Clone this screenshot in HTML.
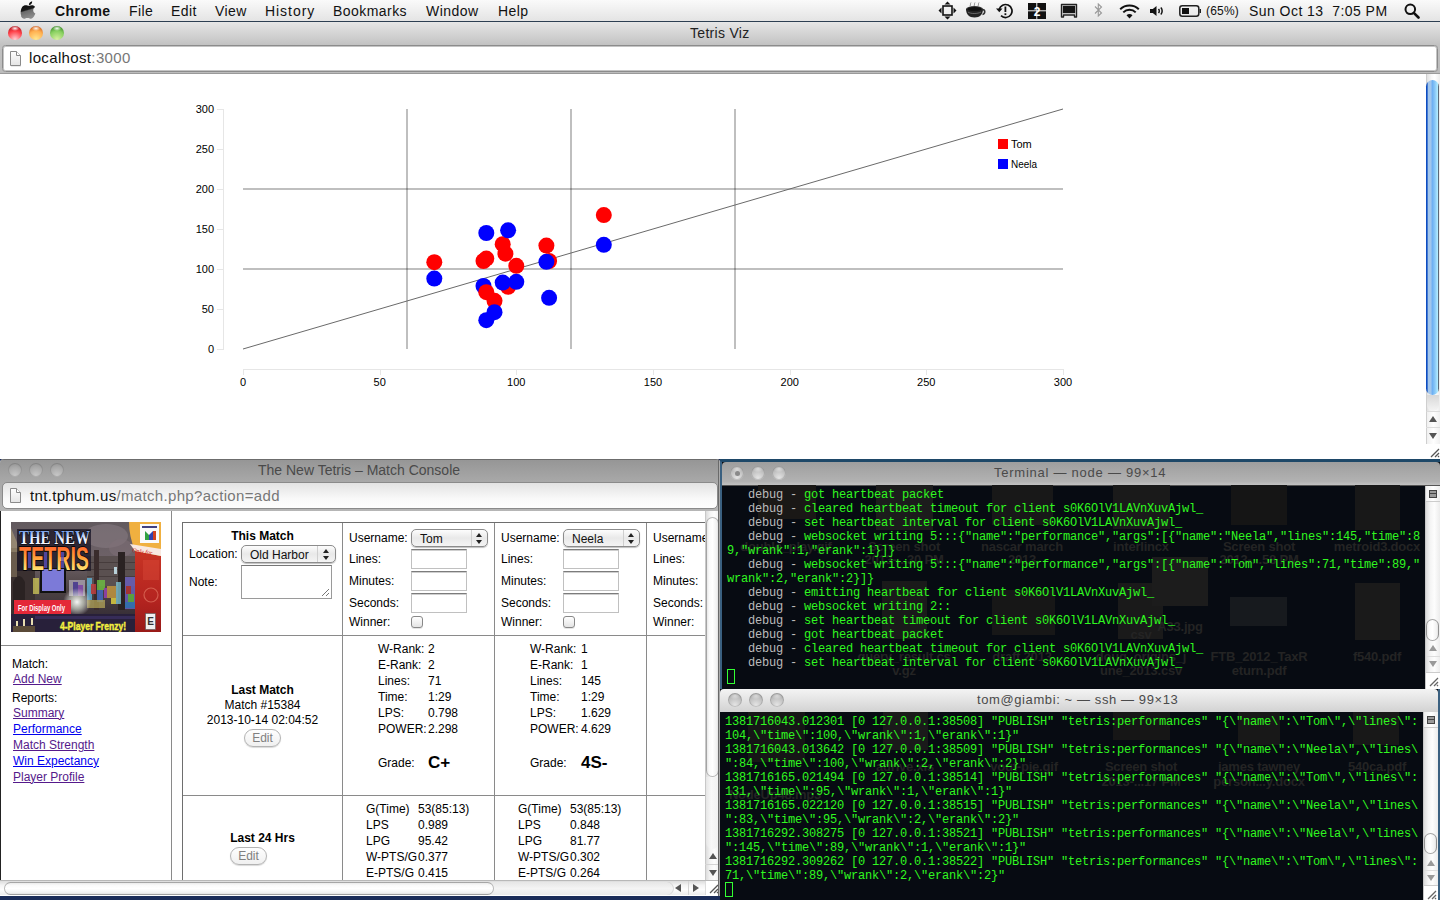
<!DOCTYPE html>
<html><head><meta charset="utf-8">
<style>
*{margin:0;padding:0;box-sizing:border-box}
html,body{width:1440px;height:900px;overflow:hidden;background:#1a2c58;font-family:"Liberation Sans",sans-serif;position:relative}
.abs{position:absolute}
#menubar{left:0;top:0;width:1440px;height:22px;background:linear-gradient(#fafafa,#e4e4e4);border-bottom:1px solid #2d3f52;font-size:14px;color:#111}
#menubar span{position:absolute;top:3px;white-space:nowrap;letter-spacing:0.45px}
.tl{position:absolute;border-radius:50%}
.tb{position:absolute;white-space:nowrap}
#w1{left:0;top:22px;width:1440px;height:437px;background:#fff;overflow:hidden}
#w1 .title{left:0;top:0;width:1440px;height:23px;background:linear-gradient(#e6e6e6,#c2c2c2)}
#w1 .toolbar{left:0;top:23px;width:1440px;height:29px;background:linear-gradient(#c2c2c2,#bcbcbc);border-bottom:1px solid #9a9a9a}
.url{position:absolute;background:#fff;border:1px solid #9b9b9b;border-radius:4px;font-size:15px;color:#111;white-space:nowrap}
.url .g{color:#777}
.term{background:#070b12;font-family:"Liberation Mono",monospace;font-size:12px;letter-spacing:-0.2px;line-height:14px;color:#30f820}
.term pre{position:absolute;font-family:inherit;font-size:inherit;line-height:inherit;white-space:pre}
.dbg{color:#bbb}
.tlg2{width:14px;height:14px;background:radial-gradient(circle at 50% 90%,#c8c8c8 0%,#a8a8a8 60%,#8a8a8a 100%);box-shadow:inset 0 0 0 1px rgba(0,0,0,0.12)}
.t{position:absolute;white-space:nowrap;line-height:14px;font-size:12px}
.sel{position:absolute;border:1px solid #8c8c8c;border-radius:5px;background:linear-gradient(#fdfdfd,#e9e9e9 50%,#f4f4f4);box-shadow:0 1px 1px rgba(0,0,0,0.25)}
.sel span{position:absolute;top:2px;font-size:12px;line-height:14px;color:#111;white-space:nowrap}
.sel i{position:absolute;top:0;width:1px;height:100%;background:#cfcfcf}
.sel b{position:absolute;top:2.5px;width:0;height:0;border-left:3px solid transparent;border-right:3px solid transparent;border-bottom:4px solid #222}
.sel b::after{content:"";position:absolute;left:-3px;top:7px;border-left:3px solid transparent;border-right:3px solid transparent;border-top:4px solid #222}
.ta{position:absolute;border:1px solid #9a9a9a;border-top-color:#777;background:#fff}
.inp{position:absolute;border:1px solid #c0c0c0;border-top:1px solid #7c7c7c;box-shadow:inset 0 1px 0 #cfcfcf;background:#fff}
.chk{position:absolute;width:12px;height:12px;border:1px solid #888;border-radius:3px;background:linear-gradient(#fff,#e4e4e4);box-shadow:0 1px 0 rgba(0,0,0,0.1)}
.btn{position:absolute;border:1px solid #b4b4b4;border-radius:9px;background:linear-gradient(#fefefe,#f0f0f0);font-size:12px;line-height:16px;text-align:center;color:#808080;box-shadow:0 1px 1px rgba(0,0,0,0.15)}
.tlg{width:14px;height:14px;background:radial-gradient(ellipse 40% 25% at 50% 20%,rgba(255,255,255,0.5),rgba(255,255,255,0)),radial-gradient(circle at 50% 85%,#e4e4e4 0%,#c0c0c0 55%,#8e8e8e 100%);box-shadow:inset 0 0 0 1px rgba(0,0,0,0.12)}
.cursor{width:8px;height:15px;border:1.5px solid #33ff33}
</style></head><body>
<!-- menu bar -->
<div id="menubar" class="abs">
  <!--MB--><svg class="abs" style="left:19.5px;top:1px" width="17" height="19" viewBox="0 0 17 19"><defs><linearGradient id="apg" x1="0" y1="0" x2="0.25" y2="1"><stop offset="0" stop-color="#000"/><stop offset="0.55" stop-color="#1a1a1a"/><stop offset="0.62" stop-color="#6a6a6a"/><stop offset="1" stop-color="#8a8a8a"/></linearGradient></defs><path d="M11.6,0.3c0.1,1.1-0.3,2.1-0.9,2.9c-0.7,0.8-1.6,1.3-2.6,1.2C8,3.4,8.5,2.3,9.1,1.7C9.8,0.9,10.8,0.4,11.6,0.3z M14.8,13.9c-0.5,1.1-0.7,1.6-1.3,2.5c-0.9,1.3-2.1,2.9-3.6,2.9c-1.3,0-1.7-0.8-3.5-0.8c-1.8,0-2.2,0.9-3.5,0.8C1.4,19.3,0.3,17.8-0.6,16.5 M8.3,5.2c1,0,2-0.6,3.1-0.6c0.5,0,2.3,0.1,3.4,1.8c-3,1.6-2.5,5.9,0.3,7.3c-0.5,1.1-0.7,1.6-1.3,2.5c-0.9,1.3-2.1,2.9-3.6,2.9c-1.3,0-1.7-0.8-3.5-0.8c-1.8,0-2.2,0.9-3.5,0.8c-1.5,0-2.6-1.4-3.5-2.7C-1.4,13.2-1,8.6,0.7,6.4c1-1.3,2.5-1.9,3.8-1.9C5.9,4.5,7,5.2,8.3,5.2z" fill="url(#apg)" transform="translate(1.5,0) scale(0.92)"/></svg>
<!-- move icon -->
<svg class="abs" style="left:938px;top:1px" width="19" height="19" viewBox="0 0 19 19" fill="#111"><rect x="5" y="5" width="9" height="9" fill="none" stroke="#111" stroke-width="1.6"/><path d="M9.5,0.5L12.5,3.5H6.5Z M9.5,18.5L12.5,15.5H6.5Z M0.5,9.5L3.5,6.5V12.5Z M18.5,9.5L15.5,6.5V12.5Z"/></svg>
<!-- coffee -->
<svg class="abs" style="left:965px;top:1px" width="21" height="18" viewBox="0 0 21 18"><path d="M5,5c1-1.5,0-2.5,1-3.5M9,5c1-1.5,0-2.5,1-3.5M13,5c1-1.5,0-2.5,1-3.5" stroke="#888" stroke-width="0.9" fill="none"/><ellipse cx="9.5" cy="8" rx="8.5" ry="3" fill="#333"/><path d="M1,8c0,5,3,8.5,8.5,8.5S18,13,18,8" fill="#222"/><path d="M17.5,8.5c3,0,3,4.5,0,5" stroke="#333" stroke-width="1.6" fill="none"/><ellipse cx="9.5" cy="8" rx="7" ry="2" fill="#111"/><path d="M3,11c2,2,10,2,13,0" stroke="#777" stroke-width="0.8" fill="none"/></svg>
<!-- time machine -->
<svg class="abs" style="left:995px;top:3px" width="19" height="16" viewBox="0 0 19 16"><path d="M4.2,6.5A6.5,6.5 0 1 1 6,12.7" stroke="#111" stroke-width="1.7" fill="none"/><path d="M1,5.5L4.3,9.3L7.5,5.5Z" fill="#111"/><rect x="9.5" y="3.5" width="1.8" height="5.5" fill="#111"/><rect x="9.5" y="10.3" width="1.8" height="1.8" fill="#111"/></svg>
<!-- spaces 2 -->
<svg class="abs" style="left:1028px;top:3px" width="18" height="16" viewBox="0 0 18 16"><rect x="0" y="0" width="8.3" height="7.3" fill="#111"/><rect x="9.3" y="0" width="8.7" height="7.3" fill="#111"/><rect x="0" y="8.3" width="8.3" height="7.7" fill="#111"/><rect x="9.3" y="8.3" width="8.7" height="7.7" fill="#111"/><text x="9" y="12.5" text-anchor="middle" font-family="Liberation Sans" font-weight="bold" font-size="12" fill="#fff">2</text></svg>
<!-- display -->
<svg class="abs" style="left:1060px;top:3px" width="19" height="15" viewBox="0 0 19 15"><path d="M1.5,1.5H16.5V14H14.5V12H3.5V14H1.5Z" fill="none" stroke="#222" stroke-width="1.4" stroke-linejoin="round"/><rect x="2.8" y="2.8" width="12.4" height="7.4" fill="#151515"/></svg>
<!-- bluetooth -->
<svg class="abs" style="left:1094px;top:3px" width="9" height="14" viewBox="0 0 9 14"><path d="M1,3.5L7.5,10L4.3,13V1L7.5,4L1,10.5" fill="none" stroke="#999" stroke-width="1.1"/></svg>
<!-- wifi -->
<svg class="abs" style="left:1118px;top:3px" width="23" height="16" viewBox="0 0 23 16"><path d="M11.5,15.5L8.5,12.2C10.2,10.6,12.8,10.6,14.5,12.2Z" fill="#111"/><path d="M5.3,9.4C8.7,6,14.3,6,17.7,9.4" stroke="#111" stroke-width="2" fill="none"/><path d="M2.2,6.2C7.3,1.3,15.7,1.3,20.8,6.2" stroke="#111" stroke-width="2" fill="none"/></svg>
<!-- volume -->
<svg class="abs" style="left:1150px;top:6px" width="15" height="10" viewBox="0 0 15 10"><path d="M0,3H2.8L6.5,0V10L2.8,7H0Z" fill="#111"/><path d="M8.5,3C9.5,4,9.5,6,8.5,7M10.8,1.5C12.6,3.3,12.6,6.7,10.8,8.5" stroke="#111" stroke-width="1.5" fill="none"/></svg>
<!-- battery -->
<svg class="abs" style="left:1179px;top:5px" width="23" height="12" viewBox="0 0 23 12"><rect x="0.8" y="0.8" width="19" height="10.4" rx="2.5" fill="none" stroke="#222" stroke-width="1.5"/><rect x="3" y="3" width="7" height="6" fill="#111"/><path d="M20.5,4H22V8H20.5" fill="#222"/></svg>
<!-- spotlight -->
<svg class="abs" style="left:1404px;top:3px" width="16" height="16" viewBox="0 0 16 16"><circle cx="6.3" cy="6.3" r="4.8" stroke="#111" stroke-width="2" fill="none"/><path d="M9.8,9.8L14.5,14.5" stroke="#111" stroke-width="2.6" stroke-linecap="round"/></svg>
<!--/MB-->
  <span style="left:55px;font-weight:bold">Chrome</span>
  <span style="left:129px">File</span>
  <span style="left:171px">Edit</span>
  <span style="left:215px">View</span>
  <span style="left:265px;letter-spacing:0.95px">History</span>
  <span style="left:333px">Bookmarks</span>
  <span style="left:426px">Window</span>
  <span style="left:498px">Help</span>
  <span style="left:1206px;top:4px;font-size:12px;letter-spacing:0.2px">(65%)</span>
  <span style="left:1249px">Sun Oct 13&nbsp;&nbsp;7:05 PM</span>
</div>

<!-- top chrome window -->
<div id="w1" class="abs">
  <!--CHART--><svg class="abs" style="left:0;top:0" width="1440" height="437" viewBox="0 22 1440 437">
<g fill="none" stroke="#e6e6e6" stroke-width="1" shape-rendering="crispEdges">
<path d="M217,109.5H223.5V349.5H217"/>
<line x1="217" y1="349.5" x2="223" y2="349.5"/>
<line x1="217" y1="309.5" x2="223" y2="309.5"/>
<line x1="217" y1="269.5" x2="223" y2="269.5"/>
<line x1="217" y1="229.5" x2="223" y2="229.5"/>
<line x1="217" y1="189.5" x2="223" y2="189.5"/>
<line x1="217" y1="149.5" x2="223" y2="149.5"/>
<line x1="217" y1="109.5" x2="223" y2="109.5"/>
<path d="M243.5,375V369.5H1063.5V375"/>
<line x1="243.5" y1="369" x2="243.5" y2="375"/>
<line x1="380.5" y1="369" x2="380.5" y2="375"/>
<line x1="516.5" y1="369" x2="516.5" y2="375"/>
<line x1="653.5" y1="369" x2="653.5" y2="375"/>
<line x1="790.5" y1="369" x2="790.5" y2="375"/>
<line x1="926.5" y1="369" x2="926.5" y2="375"/>
<line x1="1063.5" y1="369" x2="1063.5" y2="375"/>
</g>
<g font-family="Liberation Sans" font-size="11" fill="#000">
<text x="214" y="353.0" text-anchor="end">0</text>
<text x="214" y="313.0" text-anchor="end">50</text>
<text x="214" y="273.0" text-anchor="end">100</text>
<text x="214" y="233.0" text-anchor="end">150</text>
<text x="214" y="193.0" text-anchor="end">200</text>
<text x="214" y="153.0" text-anchor="end">250</text>
<text x="214" y="113.0" text-anchor="end">300</text>
<text x="243.0" y="386" text-anchor="middle">0</text>
<text x="379.7" y="386" text-anchor="middle">50</text>
<text x="516.3" y="386" text-anchor="middle">100</text>
<text x="653.0" y="386" text-anchor="middle">150</text>
<text x="789.7" y="386" text-anchor="middle">200</text>
<text x="926.3" y="386" text-anchor="middle">250</text>
<text x="1063.0" y="386" text-anchor="middle">300</text>
</g>
<g stroke="rgba(0,0,0,0.25)" stroke-width="2" shape-rendering="crispEdges">
<line x1="407" y1="109" x2="407" y2="349"/>
<line x1="571" y1="109" x2="571" y2="349"/>
<line x1="735" y1="109" x2="735" y2="349"/>
<line x1="243" y1="269" x2="1063" y2="269"/>
<line x1="243" y1="189" x2="1063" y2="189"/>
</g>
<line x1="243" y1="349" x2="1063" y2="109" stroke="#6a6a6a" stroke-width="1"/>
<circle cx="483.5" cy="286.0" r="8" fill="#00f"/>
<circle cx="486.3" cy="292.2" r="8" fill="#f00"/>
<circle cx="494.5" cy="300.8" r="8" fill="#f00"/>
<circle cx="494.5" cy="312.2" r="8" fill="#00f"/>
<circle cx="486.3" cy="320.2" r="8" fill="#00f"/>
<circle cx="549.1" cy="261.0" r="8" fill="#f00"/>
<circle cx="546.4" cy="261.8" r="8" fill="#00f"/>
<circle cx="508.1" cy="286.8" r="8" fill="#f00"/>
<circle cx="502.7" cy="282.6" r="8" fill="#00f"/>
<circle cx="434.3" cy="262.2" r="8" fill="#f00"/>
<circle cx="434.3" cy="278.6" r="8" fill="#00f"/>
<circle cx="603.8" cy="215.1" r="8" fill="#f00"/>
<circle cx="603.8" cy="244.8" r="8" fill="#00f"/>
<circle cx="546.4" cy="245.6" r="8" fill="#f00"/>
<circle cx="505.4" cy="253.7" r="8" fill="#f00"/>
<circle cx="502.7" cy="244.2" r="8" fill="#f00"/>
<circle cx="486.3" cy="233.0" r="8" fill="#00f"/>
<circle cx="508.1" cy="230.3" r="8" fill="#00f"/>
<circle cx="483.5" cy="261.0" r="8" fill="#f00"/>
<circle cx="486.3" cy="258.6" r="8" fill="#f00"/>
<circle cx="516.3" cy="265.8" r="8" fill="#f00"/>
<circle cx="516.3" cy="281.8" r="8" fill="#00f"/>
<circle cx="549.1" cy="297.8" r="8" fill="#00f"/>
<rect x="998" y="139" width="10" height="10" fill="#f00"/>
<rect x="998" y="159" width="10" height="10" fill="#00f"/>
<text x="1011" y="148" font-family="Liberation Sans" font-size="11">Tom</text>
<text x="1011" y="168" font-family="Liberation Sans" font-size="11" textLength="26" lengthAdjust="spacingAndGlyphs">Neela</text>
</svg><!--/CHART-->
  <div class="title abs"></div>
  <div class="tl" style="left:8px;top:4px;width:14px;height:14px;background:radial-gradient(ellipse 30% 18% at 50% 17%,rgba(255,255,255,0.95),rgba(255,255,255,0) 100%),radial-gradient(circle at 50% 95%,#ffd0d4 0%,#ff4048 55%,#b01820 88%,#801010 100%)"></div>
  <div class="tl" style="left:29px;top:4px;width:14px;height:14px;background:radial-gradient(ellipse 30% 18% at 50% 17%,rgba(255,255,255,0.95),rgba(255,255,255,0) 100%),radial-gradient(circle at 50% 95%,#ffe890 0%,#ffb050 55%,#d06020 88%,#a04010 100%)"></div>
  <div class="tl" style="left:50px;top:4px;width:14px;height:14px;background:radial-gradient(ellipse 30% 18% at 50% 17%,rgba(255,255,255,0.95),rgba(255,255,255,0) 100%),radial-gradient(circle at 50% 95%,#d8f0a0 0%,#88d060 55%,#3a8a28 88%,#206010 100%)"></div>
  <div class="tb" style="left:690px;top:3px;font-size:14px;color:#222;letter-spacing:0.3px">Tetris Viz</div>
  <div class="toolbar abs"></div>
  <div class="url" style="left:2px;top:23px;width:1436px;height:27px;border:1px solid #8c8c8c;box-shadow:inset 0 0 0 1px #c4c4c4;border-radius:3.5px"><span style="position:absolute;left:26px;top:3px;letter-spacing:0.35px">localhost<span class="g">:3000</span></span></div>
  <svg class="abs" style="left:9px;top:28px" width="14" height="18" viewBox="0 0 14 18"><defs><linearGradient id="fg" x1="0" y1="0" x2="0" y2="1"><stop offset="0" stop-color="#fff"/><stop offset="1" stop-color="#e4e4e4"/></linearGradient></defs><path d="M1.5,1.5H7.5L11.5,5.5V15.5H1.5Z" fill="url(#fg)" stroke="#8a8a8a" stroke-width="1"/><path d="M7.5,1.5V5.5H11.5" fill="#fff" stroke="#8a8a8a" stroke-width="1"/><path d="M2,16.5H12" stroke="#000" stroke-opacity="0.08"/></svg>
  <!-- scrollbar -->
  <div class="abs" style="left:1426px;top:52px;width:14px;height:370px;background:linear-gradient(90deg,#e2e2e2,#f8f8f8 35%,#fff 60%,#ececec);border-left:1px solid #cfcfcf"></div>
  <div class="abs" style="left:1426px;top:58px;width:13px;height:315px;border-radius:6.5px;background:linear-gradient(90deg,#0c4cc0 0%,#0c4cc0 9%,#a4c6ea 16%,#a0c6ee 38%,#6caef2 48%,#8ccaf8 70%,#b2ecff 90%,#5a6a7a 96%,#555 100%)"></div>
  <div class="abs" style="left:1427px;top:373px;width:12px;height:16px;border-radius:0 0 6px 6px;background:linear-gradient(#d8d8d8,#f4f4f4)"></div>
  <div class="abs" style="left:1426px;top:389px;width:14px;height:33px;background:linear-gradient(90deg,#f0f0f0,#fff 50%,#f0f0f0);border-left:1px solid #cfcfcf;border-top:1px solid #ddd"></div>
  <div class="abs" style="left:1429px;top:394px;width:0;height:0;border-left:4px solid transparent;border-right:4px solid transparent;border-bottom:6px solid #555"></div>
  <div class="abs" style="left:1426px;top:405px;width:14px;height:1px;background:#ddd"></div>
  <div class="abs" style="left:1429px;top:411px;width:0;height:0;border-left:4px solid transparent;border-right:4px solid transparent;border-top:6px solid #555"></div>
  <svg class="abs" style="left:1428px;top:424px" width="12" height="12" viewBox="0 0 12 12"><path d="M11,3L3,11M11,7L7,11M11,10L10,11" stroke="#555" stroke-width="1.3"/></svg>
</div>

<!-- match console window -->
<div id="w2" class="abs" style="left:0;top:459px;width:720px;height:437px;background:#fff;overflow:hidden;border-radius:4px 4px 0 0">
  <div class="abs" style="left:0;top:0;width:720px;height:52px;background:linear-gradient(#969696,#a8a8a8 42%,#aeaeae 70%,#b6b6b6);border-top:1px solid #6c6c6c"></div>
  <div class="tl tlg2" style="left:8px;top:4px"></div><div class="tl tlg2" style="left:29px;top:4px"></div><div class="tl tlg2" style="left:50px;top:4px"></div>
  <div class="url" style="left:2px;top:23px;width:716px;height:27px;border:1px solid #8a8a8a;border-radius:5px;background:linear-gradient(#e2e2e2,#f8f8f8 60%,#fdfdfd)"><span style="position:absolute;left:27px;top:4px;letter-spacing:0.33px">tnt.tphum.us<span class="g">/match.php?action=add</span></span></div>
  <svg class="abs" style="left:9px;top:28px" width="14" height="18" viewBox="0 0 14 18"><path d="M1.5,1.5H7.5L11.5,5.5V15.5H1.5Z" fill="url(#fg)" stroke="#8a8a8a" stroke-width="1"/><path d="M7.5,1.5V5.5H11.5" fill="#fff" stroke="#8a8a8a" stroke-width="1"/></svg>
  <div class="abs" style="left:0;top:52px;width:720px;height:1px;background:#222"></div>
  <div class="tb" style="left:258px;top:3px;font-size:14px;color:#4a4a4a">The New Tetris – Match Console</div>
<!--CONSOLE--><div class="abs" style="left:0px;top:52px;width:705px;height:370px;background:#fff"></div>
<div class="abs" style="left:0px;top:52px;width:1px;height:384px;background:#222"></div>
<div class="abs" style="left:171px;top:52px;width:1px;height:370px;background:#8a8a8a"></div>
<div class="abs" style="left:1px;top:186px;width:170px;height:1px;background:#8a8a8a"></div>
<svg class="abs" style="left:11px;top:63px" width="150" height="110" viewBox="0 0 150 110">
<defs>
<linearGradient id="sky" x1="0" y1="0" x2="0" y2="1"><stop offset="0" stop-color="#625a5e"/><stop offset="0.35" stop-color="#6e6268"/><stop offset="0.6" stop-color="#4e4444"/><stop offset="1" stop-color="#2a2230"/></linearGradient>
<linearGradient id="tet" x1="0" y1="0" x2="0" y2="1"><stop offset="0" stop-color="#ff4828"/><stop offset="0.45" stop-color="#ff9a38"/><stop offset="0.8" stop-color="#ffe070"/><stop offset="1" stop-color="#fff8d0"/></linearGradient>
<linearGradient id="thenew" x1="0" y1="0" x2="0" y2="1"><stop offset="0" stop-color="#4a80e0"/><stop offset="0.55" stop-color="#e8eeff"/><stop offset="1" stop-color="#ffffff"/></linearGradient>
<linearGradient id="redg" x1="0" y1="0" x2="0" y2="1"><stop offset="0" stop-color="#c83424"/><stop offset="0.6" stop-color="#b42420"/><stop offset="1" stop-color="#981a18"/></linearGradient>
<radialGradient id="glow" cx="0.5" cy="0.5" r="0.5"><stop offset="0" stop-color="#fff" stop-opacity="0.95"/><stop offset="0.5" stop-color="#e8f0e0" stop-opacity="0.6"/><stop offset="1" stop-color="#fff" stop-opacity="0"/></radialGradient>
</defs>
<rect width="150" height="110" fill="url(#sky)"/>
<!-- smoky clouds -->
<ellipse cx="95" cy="14" rx="22" ry="12" fill="#857a80" opacity="0.6"/>
<ellipse cx="110" cy="26" rx="12" ry="9" fill="#807078" opacity="0.5"/>
<!-- building grid -->
<rect x="76" y="34" width="48" height="30" fill="#5a5050"/>
<g fill="#463c3c"><rect x="76" y="40" width="48" height="1"/><rect x="76" y="47" width="48" height="1"/><rect x="76" y="54" width="48" height="1"/></g>
<rect x="83" y="28" width="5" height="60" fill="#3a2c2c"/>
<rect x="107" y="30" width="7" height="58" fill="#2a2222"/>
<rect x="103" y="45" width="3" height="7" fill="#b8d0d8"/>
<!-- left cathedral -->
<rect x="0" y="26" width="24" height="66" fill="#3a3030"/>
<path d="M2,60 Q8,48 14,60 V88 H2Z" fill="#2a2222"/>
<path d="M0,6 L10,30 H0Z" fill="#a89878" opacity="0.7"/>
<rect x="0" y="30" width="6" height="25" fill="#8a7a60" opacity="0.6"/>
<!-- tetris blocks -->
<rect x="22" y="56" width="6" height="16" fill="#c8c058" opacity="0.8"/>
<g opacity="0.75">
<rect x="58" y="58" width="16" height="16" fill="#b0a8b8"/>
<rect x="62" y="60" width="5" height="14" fill="#5040a8"/><rect x="67" y="63" width="5" height="11" fill="#9050c0"/>
<rect x="76" y="56" width="5" height="22" fill="#60b8e0"/><rect x="80" y="62" width="5" height="10" fill="#d04040"/>
<rect x="86" y="58" width="8" height="10" fill="#70c840"/><rect x="86" y="68" width="6" height="12" fill="#4070d0"/>
<rect x="93" y="66" width="8" height="10" fill="#a040c0"/><rect x="96" y="64" width="10" height="12" fill="#d0a040"/>
<rect x="100" y="76" width="8" height="6" fill="#f0e040"/><rect x="105" y="60" width="5" height="22" fill="#80c8d8"/>
<rect x="114" y="55" width="10" height="32" fill="#6a60c8"/><rect x="115" y="64" width="5" height="8" fill="#c03030"/><rect x="117" y="72" width="6" height="8" fill="#60c040"/><rect x="114" y="80" width="10" height="6" fill="#3080d0"/>
<rect x="76" y="78" width="18" height="8" fill="#d0c060" opacity="0.8"/>
</g>
<circle cx="66" cy="80" r="14" fill="url(#glow)"/>
<!-- title block outline -->
<rect x="6" y="7" width="74" height="42" fill="#1a1424" opacity="0.75"/>
<!-- T piece -->
<rect x="29" y="46" width="26" height="25" fill="#111"/>
<rect x="31" y="47" width="22" height="22" fill="#7c7ad8"/>
<!-- THE NEW -->
<text x="8" y="22" font-family="Liberation Serif" font-weight="bold" font-size="18" fill="url(#thenew)" stroke="#000" stroke-width="1.2" paint-order="stroke" textLength="71" lengthAdjust="spacingAndGlyphs">THE NEW</text>
<!-- TETRIS -->
<text x="8" y="48" font-family="Liberation Sans" font-weight="bold" font-size="33" fill="url(#tet)" stroke="#000" stroke-width="1.5" paint-order="stroke" textLength="70" lengthAdjust="spacingAndGlyphs">TETRIS</text>
<g fill="#5a50c0" opacity="0.75"><rect x="17" y="30" width="3" height="16"/><rect x="33" y="30" width="3" height="16"/><rect x="50" y="30" width="3" height="16"/></g>
<!-- right red strip -->
<path d="M124,29 L150,34 V110 H124Z" fill="url(#redg)"/>
<rect x="132" y="38" width="16" height="20" fill="#e05040" opacity="0.35"/>
<circle cx="140" cy="73" r="7" fill="none" stroke="#e8806a" stroke-width="1.2" opacity="0.6"/>
<!-- top right orange corner -->
<path d="M118,0 H150 V34 L124,29 Q118,14 118,0Z" fill="#f0b040"/>
<path d="M119,22 L150,27 V34 L124,29Z" fill="#f8e8e0"/>
<text x="121" y="30" font-family="Liberation Serif" font-style="italic" font-size="6" fill="#d02020" transform="rotate(8 121 30)">Only for</text>
<rect x="129" y="2" width="19" height="19" fill="#fafafa"/>
<rect x="131" y="4" width="15" height="2" fill="#404080"/>
<path d="M134,18 V9 L138,13 V18Z" fill="#30a040"/><path d="M138,13 L142,9 V18 H138Z" fill="#3040b0"/><path d="M142,9 H145 V18 H142Z" fill="#d04020"/>
<!-- for display only -->
<rect x="3" y="78" width="57" height="14" fill="#e42838"/>
<text x="7" y="88.5" font-family="Liberation Sans" font-weight="bold" font-size="9" fill="#fff" textLength="47" lengthAdjust="spacingAndGlyphs">For Display Only</text>
<!-- bottom -->
<rect x="0" y="92" width="124" height="18" fill="#28203a"/>
<rect x="24" y="94" width="100" height="3" fill="#3a3060" opacity="0.8"/>
<g fill="#e8dcb0"><rect x="5" y="99" width="2" height="6"/><rect x="12" y="97" width="2" height="8"/><rect x="20" y="96" width="2" height="7"/><rect x="2" y="104" width="22" height="6" fill="#5a4a38"/></g>
<text x="49" y="107.5" font-family="Liberation Sans" font-weight="bold" font-size="10" fill="#f4f040" stroke="#f4f040" stroke-width="0.4" textLength="66" lengthAdjust="spacingAndGlyphs">4-Player Frenzy!</text>
<rect x="134.5" y="91.5" width="10" height="16" fill="#f0f0f0" stroke="#555" stroke-width="0.6"/>
<text x="136.2" y="103" font-family="Liberation Sans" font-weight="bold" font-size="10" fill="#333">E</text>
</svg>

<div class="t" style="left:12px;top:197.8px;font-size:12px;color:#000;">Match:</div>
<div class="t" style="left:12px;top:231.8px;font-size:12px;color:#000;">Reports:</div>
<div class="t" style="left:13px;top:212.8px;font-size:12px;color:#551a8b;text-decoration:underline">Add New</div>
<div class="t" style="left:13px;top:246.8px;font-size:12px;color:#551a8b;text-decoration:underline">Summary</div>
<div class="t" style="left:13px;top:262.8px;font-size:12px;color:#0000ee;text-decoration:underline">Performance</div>
<div class="t" style="left:13px;top:278.8px;font-size:12px;color:#551a8b;text-decoration:underline">Match Strength</div>
<div class="t" style="left:13px;top:294.8px;font-size:12px;color:#0000ee;text-decoration:underline">Win Expectancy</div>
<div class="t" style="left:13px;top:310.8px;font-size:12px;color:#551a8b;text-decoration:underline">Player Profile</div>
<div class="abs" style="left:182px;top:63px;width:523px;height:1px;background:#6e6e6e"></div>
<div class="abs" style="left:182px;top:63px;width:1px;height:359px;background:#6e6e6e"></div>
<div class="abs" style="left:342px;top:64px;width:1px;height:358px;background:#8a8a8a"></div>
<div class="abs" style="left:494px;top:64px;width:1px;height:358px;background:#8a8a8a"></div>
<div class="abs" style="left:646px;top:64px;width:1px;height:358px;background:#8a8a8a"></div>
<div class="abs" style="left:183px;top:176px;width:522px;height:1px;background:#8a8a8a"></div>
<div class="abs" style="left:183px;top:336px;width:522px;height:1px;background:#8a8a8a"></div>
<div class="t" style="left:162.5px;width:200px;text-align:center;top:69.8px;font-size:12px;font-weight:bold;color:#000">This Match</div>
<div class="t" style="left:189px;top:87.8px;font-size:12px;color:#000;">Location:</div>
<div class="sel" style="left:241px;top:86px;width:95px;height:18px"><span style="left:8px">Old Harbor</span><i style="left:75px"></i><b style="left:81px"></b></div>
<div class="t" style="left:189px;top:115.8px;font-size:12px;color:#000;">Note:</div>
<div class="ta" style="left:241px;top:106px;width:91px;height:34px"><svg style="position:absolute;right:1px;bottom:1px" width="9" height="9" viewBox="0 0 9 9"><path d="M8,1L1,8M8,5L5,8" stroke="#777" stroke-width="1"/></svg></div>
<div class="t" style="left:349px;top:71.8px;font-size:12px;color:#000;">Username:</div>
<div class="t" style="left:349px;top:92.8px;font-size:12px;color:#000;">Lines:</div>
<div class="t" style="left:349px;top:114.8px;font-size:12px;color:#000;">Minutes:</div>
<div class="t" style="left:349px;top:136.8px;font-size:12px;color:#000;">Seconds:</div>
<div class="t" style="left:349px;top:155.8px;font-size:12px;color:#000;">Winner:</div>
<div class="sel" style="left:411px;top:70px;width:77px;height:18px"><span style="left:8px">Tom</span><i style="left:59px"></i><b style="left:64px"></b></div>
<div class="inp" style="left:411px;top:90px;width:56px;height:20px"></div>
<div class="inp" style="left:411px;top:112px;width:56px;height:20px"></div>
<div class="inp" style="left:411px;top:134px;width:56px;height:20px"></div>
<div class="chk" style="left:411px;top:157px"></div>
<div class="t" style="left:501px;top:71.8px;font-size:12px;color:#000;">Username:</div>
<div class="t" style="left:501px;top:92.8px;font-size:12px;color:#000;">Lines:</div>
<div class="t" style="left:501px;top:114.8px;font-size:12px;color:#000;">Minutes:</div>
<div class="t" style="left:501px;top:136.8px;font-size:12px;color:#000;">Seconds:</div>
<div class="t" style="left:501px;top:155.8px;font-size:12px;color:#000;">Winner:</div>
<div class="sel" style="left:563px;top:70px;width:77px;height:18px"><span style="left:8px">Neela</span><i style="left:59px"></i><b style="left:64px"></b></div>
<div class="inp" style="left:563px;top:90px;width:56px;height:20px"></div>
<div class="inp" style="left:563px;top:112px;width:56px;height:20px"></div>
<div class="inp" style="left:563px;top:134px;width:56px;height:20px"></div>
<div class="chk" style="left:563px;top:157px"></div>
<div class="t" style="left:653px;top:71.8px;font-size:12px;color:#000;">Username:</div>
<div class="t" style="left:653px;top:92.8px;font-size:12px;color:#000;">Lines:</div>
<div class="t" style="left:653px;top:114.8px;font-size:12px;color:#000;">Minutes:</div>
<div class="t" style="left:653px;top:136.8px;font-size:12px;color:#000;">Seconds:</div>
<div class="t" style="left:653px;top:155.8px;font-size:12px;color:#000;">Winner:</div>
<div class="t" style="left:162.5px;width:200px;text-align:center;top:223.8px;font-size:12px;font-weight:bold;color:#000">Last Match</div>
<div class="t" style="left:162.5px;width:200px;text-align:center;top:239.3px;font-size:12px;color:#000">Match #15384</div>
<div class="t" style="left:162.5px;width:200px;text-align:center;top:253.8px;font-size:12px;color:#000">2013-10-14 02:04:52</div>
<div class="btn" style="left:244px;top:270px;width:37px;height:18px">Edit</div>
<div class="t" style="left:378px;top:182.8px;font-size:12px;color:#000;">W-Rank:</div>
<div class="t" style="left:428px;top:182.8px;font-size:12px;color:#000;">2</div>
<div class="t" style="left:530px;top:182.8px;font-size:12px;color:#000;">W-Rank:</div>
<div class="t" style="left:581px;top:182.8px;font-size:12px;color:#000;">1</div>
<div class="t" style="left:378px;top:198.8px;font-size:12px;color:#000;">E-Rank:</div>
<div class="t" style="left:428px;top:198.8px;font-size:12px;color:#000;">2</div>
<div class="t" style="left:530px;top:198.8px;font-size:12px;color:#000;">E-Rank:</div>
<div class="t" style="left:581px;top:198.8px;font-size:12px;color:#000;">1</div>
<div class="t" style="left:378px;top:214.8px;font-size:12px;color:#000;">Lines:</div>
<div class="t" style="left:428px;top:214.8px;font-size:12px;color:#000;">71</div>
<div class="t" style="left:530px;top:214.8px;font-size:12px;color:#000;">Lines:</div>
<div class="t" style="left:581px;top:214.8px;font-size:12px;color:#000;">145</div>
<div class="t" style="left:378px;top:230.8px;font-size:12px;color:#000;">Time:</div>
<div class="t" style="left:428px;top:230.8px;font-size:12px;color:#000;">1:29</div>
<div class="t" style="left:530px;top:230.8px;font-size:12px;color:#000;">Time:</div>
<div class="t" style="left:581px;top:230.8px;font-size:12px;color:#000;">1:29</div>
<div class="t" style="left:378px;top:246.8px;font-size:12px;color:#000;">LPS:</div>
<div class="t" style="left:428px;top:246.8px;font-size:12px;color:#000;">0.798</div>
<div class="t" style="left:530px;top:246.8px;font-size:12px;color:#000;">LPS:</div>
<div class="t" style="left:581px;top:246.8px;font-size:12px;color:#000;">1.629</div>
<div class="t" style="left:378px;top:262.8px;font-size:12px;color:#000;">POWER:</div>
<div class="t" style="left:428px;top:262.8px;font-size:12px;color:#000;">2.298</div>
<div class="t" style="left:530px;top:262.8px;font-size:12px;color:#000;">POWER:</div>
<div class="t" style="left:581px;top:262.8px;font-size:12px;color:#000;">4.629</div>
<div class="t" style="left:378px;top:296.8px;font-size:12px;color:#000;">Grade:</div>
<div class="t" style="left:428px;top:297.1px;font-size:17px;font-weight:bold;color:#000;">C+</div>
<div class="t" style="left:530px;top:296.8px;font-size:12px;color:#000;">Grade:</div>
<div class="t" style="left:581px;top:297.1px;font-size:17px;font-weight:bold;color:#000;">4S-</div>
<div class="t" style="left:162.5px;width:200px;text-align:center;top:371.8px;font-size:12px;font-weight:bold;color:#000">Last 24 Hrs</div>
<div class="btn" style="left:230px;top:388px;width:37px;height:18px">Edit</div>
<div class="t" style="left:366px;top:342.8px;font-size:12px;color:#000;">G(Time)</div>
<div class="t" style="left:418px;top:342.8px;font-size:12px;color:#000;">53(85:13)</div>
<div class="t" style="left:518px;top:342.8px;font-size:12px;color:#000;">G(Time)</div>
<div class="t" style="left:570px;top:342.8px;font-size:12px;color:#000;">53(85:13)</div>
<div class="t" style="left:366px;top:358.8px;font-size:12px;color:#000;">LPS</div>
<div class="t" style="left:418px;top:358.8px;font-size:12px;color:#000;">0.989</div>
<div class="t" style="left:518px;top:358.8px;font-size:12px;color:#000;">LPS</div>
<div class="t" style="left:570px;top:358.8px;font-size:12px;color:#000;">0.848</div>
<div class="t" style="left:366px;top:374.8px;font-size:12px;color:#000;">LPG</div>
<div class="t" style="left:418px;top:374.8px;font-size:12px;color:#000;">95.42</div>
<div class="t" style="left:518px;top:374.8px;font-size:12px;color:#000;">LPG</div>
<div class="t" style="left:570px;top:374.8px;font-size:12px;color:#000;">81.77</div>
<div class="t" style="left:366px;top:390.8px;font-size:12px;color:#000;">W-PTS/G</div>
<div class="t" style="left:418px;top:390.8px;font-size:12px;color:#000;">0.377</div>
<div class="t" style="left:518px;top:390.8px;font-size:12px;color:#000;">W-PTS/G</div>
<div class="t" style="left:570px;top:390.8px;font-size:12px;color:#000;">0.302</div>
<div class="t" style="left:366px;top:406.8px;font-size:12px;color:#000;">E-PTS/G</div>
<div class="t" style="left:418px;top:406.8px;font-size:12px;color:#000;">0.415</div>
<div class="t" style="left:518px;top:406.8px;font-size:12px;color:#000;">E-PTS/G</div>
<div class="t" style="left:570px;top:406.8px;font-size:12px;color:#000;">0.264</div><!--/CONSOLE-->
  <div class="abs" style="left:705px;top:52px;width:15px;height:384px;background:linear-gradient(90deg,#dcdcdc,#f4f4f4 30%,#fdfdfd 60%,#ececec);border-left:1px solid #c8c8c8"></div>
  <div class="abs" style="left:706px;top:58px;width:13px;height:260px;border-radius:6.5px;background:linear-gradient(90deg,#e0e0e0,#fafafa 25%,#fff 50%,#f2f2f2 80%,#d8d8d8);box-shadow:inset 0 0 0 1px rgba(0,0,0,0.28)"></div>
  <div class="abs" style="left:706px;top:318px;width:13px;height:72px;border-radius:0 0 6.5px 6.5px;background:linear-gradient(90deg,#e6e6e6,#f8f8f8 40%,#f0f0f0)"></div>
  <div class="abs" style="left:709px;top:394px;width:0;height:0;border-left:4px solid transparent;border-right:4px solid transparent;border-bottom:6px solid #555"></div>
  <div class="abs" style="left:705px;top:405px;width:15px;height:1px;background:#d4d4d4"></div>
  <div class="abs" style="left:709px;top:411px;width:0;height:0;border-left:4px solid transparent;border-right:4px solid transparent;border-top:6px solid #555"></div>
  <div class="abs" style="left:0;top:421px;width:720px;height:15px;background:linear-gradient(#dcdcdc,#f4f4f4 30%,#fdfdfd 60%,#ececec);border-top:1px solid #b8b8b8"></div>
  <div class="abs" style="left:490px;top:423px;width:184px;height:13px;border-radius:0 6.5px 6.5px 0;background:linear-gradient(#e6e6e6,#f4f4f4 50%,#eaeaea);box-shadow:inset -1px 0 0 rgba(0,0,0,0.1)"></div>
  <div class="abs" style="left:4px;top:423px;width:490px;height:13px;border-radius:6.5px;background:linear-gradient(#e4e4e4,#fafafa 25%,#fff 50%,#f2f2f2 80%,#d8d8d8);box-shadow:inset 0 0 0 1px rgba(0,0,0,0.28)"></div>
  <div class="abs" style="left:675px;top:425px;width:0;height:0;border-top:4px solid transparent;border-bottom:4px solid transparent;border-right:6px solid #555"></div>
  <div class="abs" style="left:688px;top:422px;width:1px;height:14px;background:#d4d4d4"></div>
  <div class="abs" style="left:693px;top:425px;width:0;height:0;border-top:4px solid transparent;border-bottom:4px solid transparent;border-left:6px solid #555"></div>
  <div class="abs" style="left:705px;top:422px;width:15px;height:14px;background:#fff;border-left:1px solid #ddd"></div>
  <svg class="abs" style="left:707px;top:423px" width="12" height="12" viewBox="0 0 12 12"><path d="M11,3L3,11M11,7L7,11M11,10L10,11" stroke="#555" stroke-width="1.3"/></svg>
  <div class="abs" style="left:718px;top:0;width:1px;height:437px;background:#6a6a6a"></div><div class="abs" style="left:719px;top:0;width:1px;height:437px;background:#ababab"></div>
</div>

<div class="abs" style="left:720px;top:459px;width:720px;height:3px;background:#1e4868"></div>
<div class="abs" style="left:1438px;top:689px;width:2px;height:211px;background:#3a6080"></div>
<!-- terminal 1 -->
<div id="t1" class="abs term" style="left:720px;top:461px;width:720px;height:228px;overflow:hidden;border-left:2px solid #3a6080;border-top:1px solid #1e4868;background-color:#070b12">
  <div class="abs" style="left:0;top:0;width:718px;height:24px;background:linear-gradient(#9e9e9e,#b2b2b2 85%,#c2c2c2);border-bottom:1px solid #555;border-radius:4px 4px 0 0"></div>
  <div class="tl tlg" style="left:8px;top:4px"></div><div class="tl" style="left:12.5px;top:8.5px;width:5px;height:5px;background:#8a8a8a"></div><div class="tl tlg" style="left:29px;top:4px"></div><div class="tl tlg" style="left:50px;top:4px"></div>
  <div class="tb" style="left:272px;top:4px;font-size:13px;color:#4a4a4a;letter-spacing:0.75px;font-family:'Liberation Sans',sans-serif">Terminal — node — 99×14</div>
  <!--D1--><div class="abs" style="left:-722px;top:-462px;width:1440px;height:900px">
<div class="abs" style="left:758px;top:485px;width:58px;height:34px;background:#1a1816"></div>
<div class="abs" style="left:876px;top:485px;width:57px;height:45px;background:#1c1c1c"></div>
<div class="abs" style="left:992px;top:485px;width:61px;height:40px;background:#181818"></div>
<div class="abs" style="left:1113px;top:485px;width:57px;height:44px;background:#1a1a1a"></div>
<div class="abs" style="left:1231px;top:485px;width:56px;height:40px;background:#151515"></div>
<div class="abs" style="left:1355px;top:485px;width:45px;height:45px;background:#181818"></div>
<div class="abs" style="left:882px;top:581px;width:45px;height:58px;background:#1a1a1a"></div>
<div class="abs" style="left:992px;top:590px;width:63px;height:45px;background:#171717"></div>
<div class="abs" style="left:1118px;top:583px;width:45px;height:56px;background:#1a1a1a"></div>
<div class="abs" style="left:1152px;top:557px;width:56px;height:49px;background:#1c1c1c"></div>
<div class="abs" style="left:1230px;top:597px;width:57px;height:29px;background:#171a1e"></div>
<div class="abs" style="left:1355px;top:583px;width:45px;height:57px;background:#1a1a1a"></div>
<div class="abs" style="left:706px;width:160px;text-align:center;top:540px;font:bold 13px/14px 'Liberation Sans',sans-serif;color:#242424;white-space:nowrap">double_play.gif</div>
<div class="abs" style="left:824px;width:160px;text-align:center;top:540px;font:bold 13px/14px 'Liberation Sans',sans-serif;color:#242424;white-space:nowrap">Screen shot</div>
<div class="abs" style="left:824px;width:160px;text-align:center;top:553px;font:bold 13px/14px 'Liberation Sans',sans-serif;color:#242424;white-space:nowrap">2013-...30 PM</div>
<div class="abs" style="left:942px;width:160px;text-align:center;top:540px;font:bold 13px/14px 'Liberation Sans',sans-serif;color:#242424;white-space:nowrap">nascar march</div>
<div class="abs" style="left:942px;width:160px;text-align:center;top:553px;font:bold 13px/14px 'Liberation Sans',sans-serif;color:#242424;white-space:nowrap">2013</div>
<div class="abs" style="left:1061px;width:160px;text-align:center;top:540px;font:bold 13px/14px 'Liberation Sans',sans-serif;color:#242424;white-space:nowrap">interlincx</div>
<div class="abs" style="left:1179px;width:160px;text-align:center;top:540px;font:bold 13px/14px 'Liberation Sans',sans-serif;color:#242424;white-space:nowrap">Screen shot</div>
<div class="abs" style="left:1179px;width:160px;text-align:center;top:553px;font:bold 13px/14px 'Liberation Sans',sans-serif;color:#242424;white-space:nowrap">2013-...58 PM</div>
<div class="abs" style="left:1297px;width:160px;text-align:center;top:540px;font:bold 13px/14px 'Liberation Sans',sans-serif;color:#242424;white-space:nowrap">metroid3.docx</div>
<div class="abs" style="left:824px;width:160px;text-align:center;top:650px;font:bold 13px/14px 'Liberation Sans',sans-serif;color:#242424;white-space:nowrap">query_result.cs</div>
<div class="abs" style="left:824px;width:160px;text-align:center;top:664px;font:bold 13px/14px 'Liberation Sans',sans-serif;color:#242424;white-space:nowrap">v.gz</div>
<div class="abs" style="left:942px;width:160px;text-align:center;top:650px;font:bold 13px/14px 'Liberation Sans',sans-serif;color:#242424;white-space:nowrap">draft 2013</div>
<div class="abs" style="left:1100px;width:160px;text-align:center;top:620px;font:bold 13px/14px 'Liberation Sans',sans-serif;color:#242424;white-space:nowrap">A33.jpg</div>
<div class="abs" style="left:1061px;width:160px;text-align:center;top:628px;font:bold 13px/14px 'Liberation Sans',sans-serif;color:#242424;white-space:nowrap">csv</div>
<div class="abs" style="left:1061px;width:160px;text-align:center;top:650px;font:bold 13px/14px 'Liberation Sans',sans-serif;color:#242424;white-space:nowrap">doug_origins_j</div>
<div class="abs" style="left:1061px;width:160px;text-align:center;top:664px;font:bold 13px/14px 'Liberation Sans',sans-serif;color:#242424;white-space:nowrap">une_2013.csv</div>
<div class="abs" style="left:1179px;width:160px;text-align:center;top:650px;font:bold 13px/14px 'Liberation Sans',sans-serif;color:#242424;white-space:nowrap">FTB_2012_TaxR</div>
<div class="abs" style="left:1179px;width:160px;text-align:center;top:664px;font:bold 13px/14px 'Liberation Sans',sans-serif;color:#242424;white-space:nowrap">eturn.pdf</div>
<div class="abs" style="left:1297px;width:160px;text-align:center;top:650px;font:bold 13px/14px 'Liberation Sans',sans-serif;color:#242424;white-space:nowrap">f540.pdf</div>
</div><!--/D1-->
  <pre style="left:5px;top:26px"><!--T1--><span class="dbg">   debug - </span>got heartbeat packet
<span class="dbg">   debug - </span>cleared heartbeat timeout for client s0K6OlV1LAVnXuvAjwl_
<span class="dbg">   debug - </span>set heartbeat interval for client s0K6OlV1LAVnXuvAjwl_
<span class="dbg">   debug - </span>websocket writing 5:::{&quot;name&quot;:&quot;performance&quot;,&quot;args&quot;:[{&quot;name&quot;:&quot;Neela&quot;,&quot;lines&quot;:145,&quot;time&quot;:8
9,&quot;wrank&quot;:1,&quot;erank&quot;:1}]}
<span class="dbg">   debug - </span>websocket writing 5:::{&quot;name&quot;:&quot;performance&quot;,&quot;args&quot;:[{&quot;name&quot;:&quot;Tom&quot;,&quot;lines&quot;:71,&quot;time&quot;:89,&quot;
wrank&quot;:2,&quot;erank&quot;:2}]}
<span class="dbg">   debug - </span>emitting heartbeat for client s0K6OlV1LAVnXuvAjwl_
<span class="dbg">   debug - </span>websocket writing 2::
<span class="dbg">   debug - </span>set heartbeat timeout for client s0K6OlV1LAVnXuvAjwl_
<span class="dbg">   debug - </span>got heartbeat packet
<span class="dbg">   debug - </span>cleared heartbeat timeout for client s0K6OlV1LAVnXuvAjwl_
<span class="dbg">   debug - </span>set heartbeat interval for client s0K6OlV1LAVnXuvAjwl_<!--/T1--></pre>
  <div class="abs cursor" style="left:5px;top:207px"></div>
  <div class="abs" style="left:703px;top:24px;width:15px;height:203px;background:linear-gradient(90deg,#dcdcdc,#f4f4f4 30%,#fdfdfd 60%,#ececec);border-left:1px solid #c8c8c8"></div>
  <div class="abs" style="left:704px;top:24px;width:14px;height:16px;background:linear-gradient(90deg,#eee,#fff 50%,#eee);border-bottom:1px solid #ccc"></div>
  <div class="abs" style="left:707px;top:28px;width:8px;height:8px;border:1px solid #444;background:linear-gradient(#999 0,#999 40%,#444 40%,#444 55%,#999 55%)"></div>
  <div class="abs" style="left:704px;top:157px;width:13px;height:22px;border-radius:6.5px;background:linear-gradient(90deg,#e0e0e0,#fafafa 25%,#fff 50%,#f2f2f2 80%,#d8d8d8);box-shadow:inset 0 0 0 1px rgba(0,0,0,0.35)"></div>
  <div class="abs" style="left:707px;top:183px;width:0;height:0;border-left:4px solid transparent;border-right:4px solid transparent;border-bottom:6px solid #999"></div>
  <div class="abs" style="left:704px;top:194px;width:14px;height:1px;background:#ddd"></div>
  <div class="abs" style="left:707px;top:199px;width:0;height:0;border-left:4px solid transparent;border-right:4px solid transparent;border-top:6px solid #999"></div>
  <div class="abs" style="left:704px;top:210px;width:14px;height:17px;background:#fff;border-top:1px solid #ccc"></div>
  <svg class="abs" style="left:705px;top:213px" width="12" height="12" viewBox="0 0 12 12"><path d="M11,3L3,11M11,7L7,11M11,10L10,11" stroke="#666" stroke-width="1.3"/></svg>
</div>
<!-- terminal 2 -->
<div id="t2" class="abs term" style="left:720px;top:689px;width:718px;height:211px;overflow:hidden">
  <div class="abs" style="left:0;top:0;width:718px;height:23px;background:linear-gradient(#f4f4f4,#d2d2d2);border-radius:4px 4px 0 0"></div>
  <div class="tl tlg" style="left:8px;top:4px"></div><div class="tl tlg" style="left:29px;top:4px"></div><div class="tl tlg" style="left:50px;top:4px"></div>
  <div class="tb" style="left:257px;top:4px;font-size:13px;color:#4a4a4a;letter-spacing:0.6px;font-family:'Liberation Sans',sans-serif">tom@giambi: ~ — ssh — 99×13</div>
  <!--D2--><div class="abs" style="left:-720px;top:-689px;width:1440px;height:900px">
<div class="abs" style="left:748px;top:712px;width:57px;height:50px;background:#161616"></div>
<div class="abs" style="left:883px;top:712px;width:45px;height:38px;background:#1a1a1a"></div>
<div class="abs" style="left:1113px;top:712px;width:57px;height:28px;background:#161616"></div>
<div class="abs" style="left:1238px;top:712px;width:42px;height:33px;background:#181818"></div>
<div class="abs" style="left:1353px;top:712px;width:46px;height:33px;background:#181818"></div>
<div class="abs" style="left:825px;width:160px;text-align:center;top:760px;font:bold 13px/14px 'Liberation Sans',sans-serif;color:#242424;white-space:nowrap">adrive.xls</div>
<div class="abs" style="left:944px;width:160px;text-align:center;top:760px;font:bold 13px/14px 'Liberation Sans',sans-serif;color:#242424;white-space:nowrap">vout-pie.gif</div>
<div class="abs" style="left:695px;width:160px;text-align:center;top:788px;font:bold 13px/14px 'Liberation Sans',sans-serif;color:#242424;white-space:nowrap">NodeUp48.mp3</div>
<div class="abs" style="left:1061px;width:160px;text-align:center;top:760px;font:bold 13px/14px 'Liberation Sans',sans-serif;color:#242424;white-space:nowrap">Screen shot</div>
<div class="abs" style="left:1061px;width:160px;text-align:center;top:775px;font:bold 13px/14px 'Liberation Sans',sans-serif;color:#242424;white-space:nowrap">2013-...17 PM</div>
<div class="abs" style="left:1179px;width:160px;text-align:center;top:760px;font:bold 13px/14px 'Liberation Sans',sans-serif;color:#242424;white-space:nowrap">james tawney</div>
<div class="abs" style="left:1179px;width:160px;text-align:center;top:775px;font:bold 13px/14px 'Liberation Sans',sans-serif;color:#242424;white-space:nowrap">person...y.docx</div>
<div class="abs" style="left:1297px;width:160px;text-align:center;top:760px;font:bold 13px/14px 'Liberation Sans',sans-serif;color:#242424;white-space:nowrap">540ca.pdf</div>
</div><!--/D2-->
  <pre style="left:5px;top:26px"><!--T2-->1381716043.012301 [0 127.0.0.1:38508] &quot;PUBLISH&quot; &quot;tetris:performances&quot; &quot;{\&quot;name\&quot;:\&quot;Tom\&quot;,\&quot;lines\&quot;:
104,\&quot;time\&quot;:100,\&quot;wrank\&quot;:1,\&quot;erank\&quot;:1}&quot;
1381716043.013642 [0 127.0.0.1:38509] &quot;PUBLISH&quot; &quot;tetris:performances&quot; &quot;{\&quot;name\&quot;:\&quot;Neela\&quot;,\&quot;lines\
&quot;:84,\&quot;time\&quot;:100,\&quot;wrank\&quot;:2,\&quot;erank\&quot;:2}&quot;
1381716165.021494 [0 127.0.0.1:38514] &quot;PUBLISH&quot; &quot;tetris:performances&quot; &quot;{\&quot;name\&quot;:\&quot;Tom\&quot;,\&quot;lines\&quot;:
131,\&quot;time\&quot;:95,\&quot;wrank\&quot;:1,\&quot;erank\&quot;:1}&quot;
1381716165.022120 [0 127.0.0.1:38515] &quot;PUBLISH&quot; &quot;tetris:performances&quot; &quot;{\&quot;name\&quot;:\&quot;Neela\&quot;,\&quot;lines\
&quot;:83,\&quot;time\&quot;:95,\&quot;wrank\&quot;:2,\&quot;erank\&quot;:2}&quot;
1381716292.308275 [0 127.0.0.1:38521] &quot;PUBLISH&quot; &quot;tetris:performances&quot; &quot;{\&quot;name\&quot;:\&quot;Neela\&quot;,\&quot;lines\
&quot;:145,\&quot;time\&quot;:89,\&quot;wrank\&quot;:1,\&quot;erank\&quot;:1}&quot;
1381716292.309262 [0 127.0.0.1:38522] &quot;PUBLISH&quot; &quot;tetris:performances&quot; &quot;{\&quot;name\&quot;:\&quot;Tom\&quot;,\&quot;lines\&quot;:
71,\&quot;time\&quot;:89,\&quot;wrank\&quot;:2,\&quot;erank\&quot;:2}&quot;<!--/T2--></pre>
  <div class="abs cursor" style="left:5px;top:193px"></div>
  <div class="abs" style="left:703px;top:23px;width:15px;height:188px;background:linear-gradient(90deg,#dcdcdc,#f4f4f4 30%,#fdfdfd 60%,#ececec);border-left:1px solid #c8c8c8"></div>
  <div class="abs" style="left:704px;top:23px;width:14px;height:16px;background:linear-gradient(90deg,#eee,#fff 50%,#eee);border-bottom:1px solid #ccc"></div>
  <div class="abs" style="left:707px;top:27px;width:8px;height:8px;border:1px solid #444;background:linear-gradient(#999 0,#999 40%,#444 40%,#444 55%,#999 55%)"></div>
  <div class="abs" style="left:704px;top:144px;width:13px;height:21px;border-radius:6.5px;background:linear-gradient(90deg,#e0e0e0,#fafafa 25%,#fff 50%,#f2f2f2 80%,#d8d8d8);box-shadow:inset 0 0 0 1px rgba(0,0,0,0.35)"></div>
  <div class="abs" style="left:707px;top:171px;width:0;height:0;border-left:4px solid transparent;border-right:4px solid transparent;border-bottom:6px solid #999"></div>
  <div class="abs" style="left:704px;top:181px;width:14px;height:1px;background:#ddd"></div>
  <div class="abs" style="left:707px;top:186px;width:0;height:0;border-left:4px solid transparent;border-right:4px solid transparent;border-top:6px solid #999"></div>
  <div class="abs" style="left:704px;top:196px;width:14px;height:15px;background:#fff;border-top:1px solid #ccc"></div>
  <svg class="abs" style="left:705px;top:199px" width="12" height="12" viewBox="0 0 12 12"><path d="M11,3L3,11M11,7L7,11M11,10L10,11" stroke="#666" stroke-width="1.3"/></svg>
</div>
</body></html>
